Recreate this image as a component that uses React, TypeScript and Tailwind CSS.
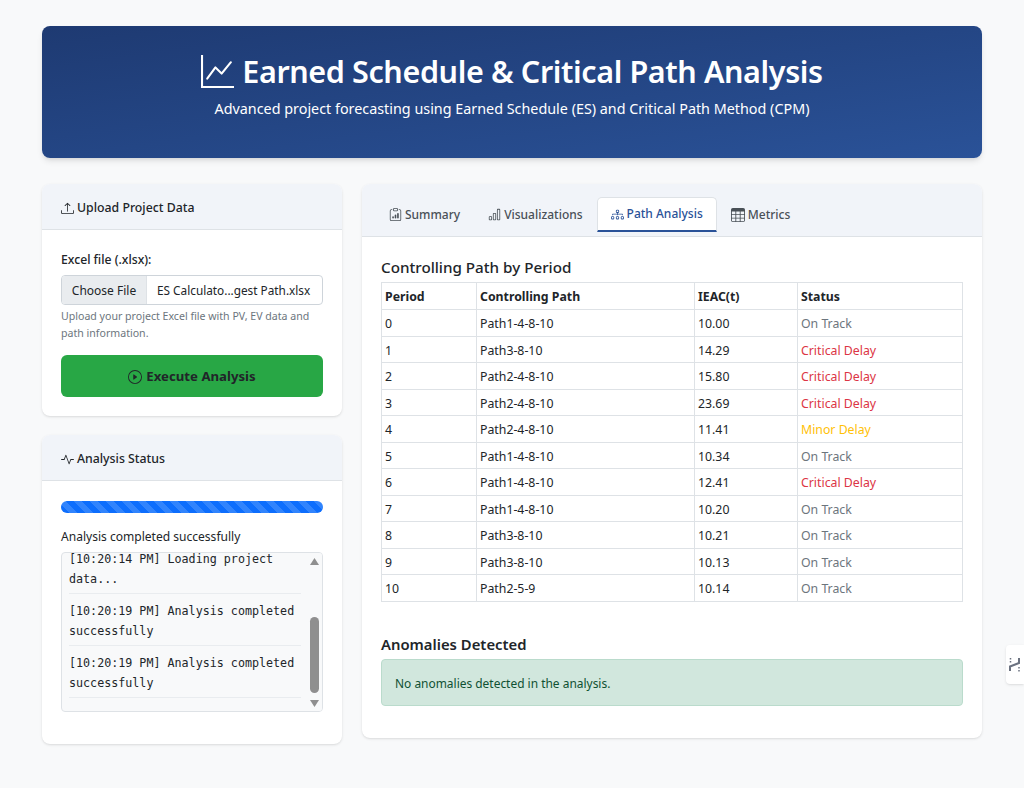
import { useEffect, useRef } from "react";
import { BsGraphUp, BsUpload, BsPlayCircle, BsActivity, BsClipboardData, BsBarChart, BsDiagram3, BsTable } from "react-icons/bs";

const rows: [string, string, string, string][] = [
  ["0", "Path1-4-8-10", "10.00", "On Track"],
  ["1", "Path3-8-10", "14.29", "Critical Delay"],
  ["2", "Path2-4-8-10", "15.80", "Critical Delay"],
  ["3", "Path2-4-8-10", "23.69", "Critical Delay"],
  ["4", "Path2-4-8-10", "11.41", "Minor Delay"],
  ["5", "Path1-4-8-10", "10.34", "On Track"],
  ["6", "Path1-4-8-10", "12.41", "Critical Delay"],
  ["7", "Path1-4-8-10", "10.20", "On Track"],
  ["8", "Path3-8-10", "10.21", "On Track"],
  ["9", "Path3-8-10", "10.13", "On Track"],
  ["10", "Path2-5-9", "10.14", "On Track"],
];

const logs = [
  "[10:20:09 PM] Starting analysis...",
  "[10:20:14 PM] Loading project data...",
  "[10:20:19 PM] Analysis completed successfully",
  "[10:20:19 PM] Analysis completed successfully",
];

function statusClass(s: string) {
  if (s === "Critical Delay") return "text-[#dc3545]";
  if (s === "Minor Delay") return "text-[#ffc107]";
  return "text-[#6c757d]";
}

function Tab({ icon, label, active }: { icon: React.ReactNode; label: string; active?: boolean }) {
  return (
    <div
      className={
        active
          ? "flex h-[35px] items-center gap-[3px] rounded-t-[5px] border border-b-2 border-[#dee2e6] border-b-[#2a5298] bg-white px-[13px] text-[#2a5298]"
          : "flex h-[35px] items-center gap-[3px] px-[14px] text-[#495057]"
      }
    >
      {icon}
      <span className="font-medium">{label}</span>
    </div>
  );
}

export default function App() {
  const logRef = useRef<HTMLDivElement>(null);
  useEffect(() => {
    if (logRef.current) logRef.current.scrollTop = logRef.current.scrollHeight;
  }, []);

  return (
    <div className="min-h-[788px] bg-[#f8f9fa] px-[42px] pt-[26px] font-['Noto_Sans',sans-serif] text-[#212529]">
      <header className="flex h-[132px] flex-col items-center rounded-lg bg-gradient-to-br from-[#1e3a72] to-[#2a5298] pt-[23px] text-white shadow-md">
        <h1 className="flex items-center gap-[8px] text-[30.5px] leading-[44px] font-semibold tracking-[-0.38px]">
          <BsGraphUp className="h-[33px] w-[33px]" />
          <span>Earned Schedule &amp; Critical Path Analysis</span>
        </h1>
        <p className="mt-[4px] text-[14.35px] leading-[24px]">
          Advanced project forecasting using Earned Schedule (ES) and Critical Path Method (CPM)
        </p>
      </header>

      <div className="mt-[26px] flex items-start gap-[20px]">
        <div className="flex w-[300px] flex-col gap-[19px]">
          <section className="overflow-hidden rounded-lg bg-white shadow-sm">
            <div className="flex h-[46px] items-center gap-[3px] border-b border-[#dee2e6] bg-[#f1f4f9] px-[19px] pt-[3px] text-[12.3px] font-medium">
              <BsUpload className="h-[13px] w-[13px]" />
              <span>Upload Project Data</span>
            </div>
            <div className="h-[186px] px-[19px] pt-[21px]">
              <label className="block text-[12.2px] leading-[18px] font-medium">Excel file (.xlsx):</label>
              <div className="mt-[6px] flex h-[30px] items-center overflow-hidden rounded border border-[#ced4da]">
                <span className="flex h-full w-[85px] items-center justify-center border-r border-[#dee2e6] bg-[#e9ecef] pt-[1px] text-[12px]">Choose File</span>
                <span className="pt-[1px] pl-[10px] text-[11.8px]">ES Calculato...gest Path.xlsx</span>
              </div>
              <p className="mt-[3px] text-[10.6px] leading-[17px] text-[#6c757d]">
                Upload your project Excel file with PV, EV data and path information.
              </p>
              <button className="mt-[13px] flex h-[42px] w-full items-center justify-center gap-1 rounded-md bg-[#28a745] pt-[1px] text-[13.2px] font-bold">
                <BsPlayCircle className="h-[14px] w-[14px]" />
                <span>Execute Analysis</span>
              </button>
            </div>
          </section>

          <section className="overflow-hidden rounded-lg bg-white shadow-sm">
            <div className="flex h-[46px] items-center gap-[3px] border-b border-[#dee2e6] bg-[#f1f4f9] px-[19px] pt-[3px] text-[12.3px] font-medium">
              <BsActivity className="h-[13px] w-[13px]" />
              <span>Analysis Status</span>
            </div>
            <div className="h-[263px] px-[19px] pt-[20px]">
              <div className="h-[12px] rounded-md bg-[repeating-linear-gradient(45deg,#0d6efd,#0d6efd_5.66px,#3184fd_5.66px,#3184fd_11.32px)]" />
              <p className="mt-[14px] text-[12.05px] leading-[20px]">Analysis completed successfully</p>
              <div className="relative mt-[5px] h-[160px] overflow-hidden rounded border border-[#dee2e6] bg-[#f8f9fa]">
                <div
                  ref={logRef}
                  className="h-full overflow-hidden pr-[21px] pl-[7px] font-['DejaVu_Sans_Mono',monospace] text-[11.7px] leading-[19.5px]"
                >
                  {logs.map((l, i) => (
                    <div key={i} className="border-b border-[#e9ecef] pt-[8px] pb-[4px]">{l}</div>
                  ))}
                  <div className="h-[13px]" />
                </div>
                <div className="absolute top-0 right-0 flex h-full w-[15px] flex-col items-center bg-[#f8f9fa]">
                  <svg viewBox="0 0 9 7" className="mt-[5px] h-[7px] w-[9px]" fill="#8f8f8f"><path d="M4.5 0L9 7H0z" /></svg>
                  <div className="mt-[52px] h-[76px] w-[9px] rounded-[5px] bg-[#8f8f8f]" />
                  <svg viewBox="0 0 9 7" className="mt-[7px] h-[7px] w-[9px]" fill="#8f8f8f"><path d="M0 0h9L4.5 7z" /></svg>
                </div>
              </div>
            </div>
          </section>
        </div>

        <section className="w-[620px] overflow-hidden rounded-lg bg-white shadow-sm">
          <div className="flex h-[53px] items-end border-b border-[#dee2e6] bg-[#f1f4f9] pb-[4px] pl-[13px] text-[12px]">
            <div className="flex h-[35px] items-center">
              <Tab icon={<BsClipboardData className="h-[13px] w-[13px]" />} label="Summary" />
              <Tab icon={<BsBarChart className="h-[13px] w-[13px]" />} label="Visualizations" />
              <Tab active icon={<BsDiagram3 className="h-[13px] w-[13px]" />} label="Path Analysis" />
              <Tab icon={<BsTable className="h-[14px] w-[14px]" />} label="Metrics" />
            </div>
          </div>
          <div className="h-[501px] px-[19px] pt-[19px]">
            <h3 className="text-[15.2px] leading-[22px] font-medium">Controlling Path by Period</h3>
            <table className="mt-[4px] w-[581px] table-fixed border-collapse text-[12.3px]">
              <colgroup>
                <col className="w-[95px]" />
                <col className="w-[218px]" />
                <col className="w-[103px]" />
                <col className="w-[165px]" />
              </colgroup>
              <thead>
                <tr className="h-[27px]">
                  {["Period", "Controlling Path", "IEAC(t)", "Status"].map((h) => (
                    <th key={h} className="border border-[#dee2e6] px-[3px] pt-[3px] text-left font-bold">{h}</th>
                  ))}
                </tr>
              </thead>
              <tbody>
                {rows.map((r) => (
                  <tr key={r[0]} className="h-[26.5px]">
                    <td className="border border-[#dee2e6] px-[3px] pt-[3px]">{r[0]}</td>
                    <td className="border border-[#dee2e6] px-[3px] pt-[3px]">{r[1]}</td>
                    <td className="border border-[#dee2e6] px-[3px] pt-[3px]">{r[2]}</td>
                    <td className={`border border-[#dee2e6] px-[3px] pt-[3px] ${statusClass(r[3])}`}>{r[3]}</td>
                  </tr>
                ))}
              </tbody>
            </table>
            <h3 className="mt-[31px] text-[14.85px] leading-[22px] font-semibold">Anomalies Detected</h3>
            <div className="mt-[4px] flex h-[47px] items-center rounded border border-[#badbcc] bg-[#d1e7dd] px-[13px] pt-[3px] text-[11.95px] text-[#0f5132]">
              No anomalies detected in the analysis.
            </div>
          </div>
        </section>
      </div>

      <div className="fixed top-[645px] right-0 flex h-[39px] w-[18px] items-center justify-center rounded-l bg-white shadow">
        <svg viewBox="0 0 14 16" className="h-[16px] w-[14px]" fill="none" stroke="#6b7280" strokeWidth="2">
          <path d="M2 14V9.5L11 6V1" />
          <path d="M2.5 1v5M11 10v5" strokeDasharray="1.5 1.5" strokeWidth="1.5" />
        </svg>
      </div>
    </div>
  );
}
